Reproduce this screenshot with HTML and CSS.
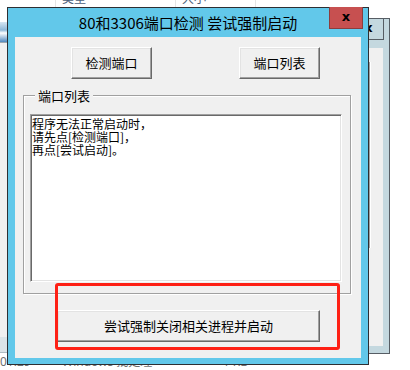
FILE: index.html
```html
<!DOCTYPE html>
<html>
<head>
<meta charset="utf-8">
<link rel="stylesheet" href="styles.css">
</head>
<body>
<div class="desk">
  <div class="explorer">
    <div class="hdr">
      <div class="hc c0"></div>
      <div class="hc c1">类型</div>
      <div class="hc c2">大小</div>
      <div class="hc c3"></div>
    </div>
    <div class="ebody">
      <div class="nav">
        <div class="nav-white"></div>
        <div class="nav-icon"></div>
        <div class="nav-line"></div>
        <div class="nav-gray"></div>
        <div class="nav-blue"></div>
        <div class="nav-line2"></div>
      </div>
    </div>
    <div class="erow">
      <div class="rc r0">01:29</div>
      <div class="rc r1">Windows 批处理</div>
      <div class="rc r2">1 KB</div>
    </div>
  </div>

  <div class="win2">
    <div class="close2">x</div>
    <div class="client2"><div class="vline"></div></div>
  </div>

  <div class="dialog">
    <div class="titlebar">80和3306端口检测 尝试强制启动</div>
    <div class="close">x</div>
    <div class="client">
      <div class="btnrow">
        <div class="btn">检测端口</div>
        <div class="btn">端口列表</div>
      </div>
      <div class="group">
        <span class="legend">端口列表</span>
        <div class="edit">程序无法正常启动时，<br>请先点[检测端口]，<br>再点[尝试启动]。</div>
      </div>
      <div class="btn wide">尝试强制关闭相关进程并启动</div>
    </div>
  </div>

  <div class="annot"></div>
</div>
</body>
</html>
```
FILE: styles.css
```css
html, body {
  margin: 0;
  padding: 0;
  background: #fff;
}

.desk {
  position: relative;
  width: 410px;
  height: 370px;
  overflow: hidden;
  background: #fff;
  font-family: "Noto Sans CJK SC", sans-serif;
}

/* background explorer window */
.explorer {
  position: absolute;
  left: 0;
  top: 0;
  width: 410px;
  height: 370px;
  display: flex;
  flex-direction: column;
  background: #fff;
}

.hdr {
  display: flex;
  margin-top: -11px;
  height: 18px;
  font: 12px/18px "Noto Sans CJK SC", sans-serif;
  color: #4c607a;
}

.hc {
  box-sizing: border-box;
  border-right: 1px solid #e5e5e5;
  padding-left: 6px;
}

.c0 { width: 56px; }
.c1 { width: 120px; }
.c2 { width: 80px; }
.c3 { border-right: 0; flex: 1; }

.ebody {
  height: 355px;
  display: flex;
}

.nav {
  width: 8px;
  display: flex;
  flex-direction: column;
}

.nav-white { height: 15px; background: #fff; }
.nav-icon { height: 20px; background: linear-gradient(180deg, #d6e6f2 0%, #8fb8d8 40%, #ffffff 55%, #4f88bf 100%); }
.nav-line { height: 1px; background: #9aa7b0; }
.nav-gray { height: 294px; background: #f0f0f0; }
.nav-blue { height: 15px; background: #dbe4e8; }
.nav-line2 { height: 1px; background: #aebcc3; }

.erow {
  display: flex;
  height: 16px;
  font: 12px/16px "Noto Sans", "Noto Sans CJK SC", sans-serif;
  color: #6f6f6f;
}

.rc { box-sizing: border-box; }
.r0 { width: 56px; }
.r1 { width: 120px; padding-left: 6px; }
.r2 { width: 80px; text-align: right; padding-right: 8px; }

/* second (inactive) dialog behind */
.win2 {
  position: absolute;
  left: 300px;
  top: 18px;
  width: 90px;
  height: 336px;
  box-sizing: border-box;
  border: 1px solid #565d64;
  background: #c4d8df;
  padding: 29px 6px 7px 7px;
}

.close2 {
  position: absolute;
  right: 5px;
  top: -1px;
  width: 30px;
  height: 22px;
  box-sizing: border-box;
  border-right: 1px solid #565d64;
  border-bottom: 1px solid #565d64;
  display: flex;
  align-items: center;
  justify-content: center;
  font: bold 13px/1 "DejaVu Sans", sans-serif;
  color: #000;
  padding-bottom: 3px;
}

.client2 {
  height: 100%;
  background: #f0f0f0;
  overflow: hidden;
}

.vline {
  margin: 14px 0 0 61px;
  width: 1px;
  height: 186px;
  background: #a0a0a0;
  box-shadow: 1px 0 #fff;
}

/* main dialog */
.dialog {
  position: absolute;
  left: 7px;
  top: 7px;
  width: 362px;
  height: 358px;
  box-sizing: border-box;
  border: 1px solid #2d2f33;
  background: #62c8ea;
  padding: 0 7px 6px 7px;
  display: flex;
  flex-direction: column;
}

.titlebar {
  height: 29px;
  display: flex;
  align-items: center;
  justify-content: center;
  font: 15px/1 "Noto Sans CJK SC", sans-serif;
  color: #000;
}

.close {
  position: absolute;
  left: 321px;
  top: -1px;
  width: 34px;
  height: 22px;
  box-sizing: border-box;
  border: 1px solid #8c3d3d;
  border-top: 0;
  background: #c75050;
  display: flex;
  align-items: center;
  justify-content: center;
  font: bold 13px/1 "DejaVu Sans", sans-serif;
  color: #000;
  padding-bottom: 3px;
}

.client {
  flex: 1;
  background: #f0f0f0;
  display: flex;
  flex-direction: column;
  align-items: flex-start;
}

.btnrow {
  display: flex;
  gap: 87px;
  margin: 10px 0 0 56px;
}

.btn {
  width: 81px;
  height: 32px;
  box-sizing: border-box;
  border: 1px solid;
  border-color: #ffffff #696969 #696969 #ffffff;
  box-shadow: inset -1px -1px #a0a0a0, inset 1px 1px #e3e3e3;
  background: #f0f0f0;
  display: flex;
  align-items: center;
  justify-content: center;
  font: 13px/1 "Noto Sans CJK SC", sans-serif;
  color: #000;
  padding-bottom: 2px;
}

.btn.wide {
  width: 263px;
  margin: 16px 0 0 42px;
}

.group {
  margin: 16px 0 0 8px;
  width: 328px;
  height: 199px;
  box-sizing: border-box;
  border: 1px solid #a0a0a0;
  box-shadow: inset 1px 1px #fff, 1px 1px #fff;
}

.legend {
  display: block;
  width: max-content;
  margin: -7px 0 0 11px;
  padding: 0 3px;
  background: #f0f0f0;
  font: 13px/13px "Noto Sans CJK SC", sans-serif;
  color: #000;
}

.edit {
  margin: 12px 0 0 6px;
  width: 312px;
  height: 168px;
  box-sizing: border-box;
  border: 1px solid;
  border-color: #a0a0a0 #ffffff #ffffff #a0a0a0;
  box-shadow: inset 1px 1px #696969, inset -1px -1px #e3e3e3;
  background: #fff;
  padding: 2px 1px 0 1px;
  font: 12px/13px "Noto Sans CJK SC", sans-serif;
  color: #000;
}

/* red annotation box */
.annot {
  position: absolute;
  left: 55px;
  top: 283px;
  width: 285px;
  height: 67px;
  box-sizing: border-box;
  border: 3px solid #fe2015;
  border-radius: 3px;
}
```
